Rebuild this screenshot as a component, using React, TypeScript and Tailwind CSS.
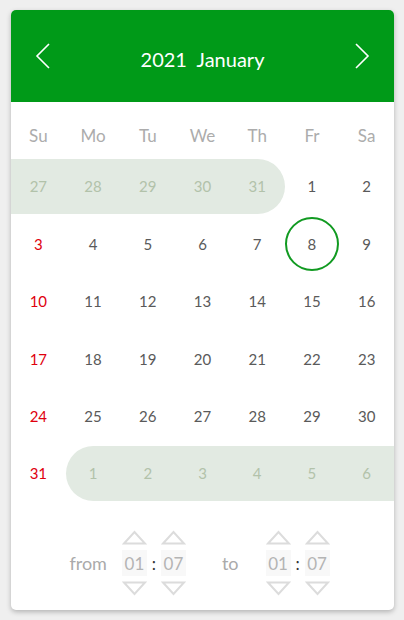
import React from 'react';

type Day = { n: number; muted?: boolean; sunday?: boolean };

const weekDays = ['Su', 'Mo', 'Tu', 'We', 'Th', 'Fr', 'Sa'];

const buildWeeks = (): Day[][] => {
    const days: Day[] = [];
    [27, 28, 29, 30, 31].forEach((n) => days.push({ n, muted: true }));
    for (let n = 1; n <= 31; n++) days.push({ n });
    for (let n = 1; n <= 6; n++) days.push({ n, muted: true });
    const weeks: Day[][] = [];
    for (let i = 0; i < days.length; i += 7) {
        weeks.push(days.slice(i, i + 7).map((d, j) => ({ ...d, sunday: j === 0 && !d.muted })));
    }
    return weeks;
};

const Chevron: React.FC<{ dir: 'left' | 'right' }> = ({ dir }) => (
    <svg width="16" height="26" viewBox="0 0 16 26" fill="none">
        <path
            d={dir === 'left' ? 'M14 1 L2 13 L14 25' : 'M2 1 L14 13 L2 25'}
            stroke="white"
            strokeWidth="1.6"
        />
    </svg>
);

const Triangle: React.FC<{ up?: boolean }> = ({ up }) => (
    <svg width="25" height="15" viewBox="0 0 25 15" fill="none">
        <path
            d={up ? 'M2 13.5 L12.5 2 L23 13.5 Z' : 'M2 1.5 L12.5 13 L23 1.5 Z'}
            stroke="#dcdcdc"
            strokeWidth="2"
            strokeLinejoin="miter"
        />
    </svg>
);

const Spinner: React.FC<{ value: string }> = ({ value }) => (
    <div className="flex flex-col items-center gap-[5px]">
        <Triangle up />
        <div className="w-[25px] h-[26px] bg-[#f8f8f8] flex items-center justify-center text-[17px] text-[#b4b4b4]">
            {value}
        </div>
        <Triangle />
    </div>
);

const TimePicker: React.FC<{ h: string; m: string }> = ({ h, m }) => (
    <div className="flex items-center">
        <Spinner value={h} />
        <span className="w-[14px] text-center text-[17px] text-[#333]">:</span>
        <Spinner value={m} />
    </div>
);

export default function App() {
    const weeks = buildWeeks();

    return (
        <div className="min-h-screen bg-[#efefef] pt-[10px] pl-[11px]" style={{ fontFamily: 'Lato, "Open Sans", sans-serif' }}>
            <div className="w-[383px] bg-white rounded-[5px] shadow-[0_2px_5px_rgba(0,0,0,0.25)] overflow-hidden">
                <div className="h-[92px] bg-[#009a18] flex items-center justify-between px-[24px]">
                    <Chevron dir="left" />
                    <span className="text-white text-[20px] pt-[5px]">2021&nbsp; January</span>
                    <Chevron dir="right" />
                </div>

                <div className="grid grid-cols-7 h-[56px] pt-[12px] items-center">
                    {weekDays.map((d) => (
                        <span key={d} className="text-center text-[17px] text-[#acacac]">{d}</span>
                    ))}
                </div>

                {weeks.map((week, wi) => (
                    <div key={wi} className="grid grid-cols-7 h-[57.4px] items-center">
                        {week.map((d, di) => {
                            const first = di === 0 || !week[di - 1].muted;
                            const last = di === 6 || !week[di + 1].muted;
                            const pill = d.muted
                                ? `bg-[#e2eae2] text-[#b2c2aa] ${first && di !== 0 ? 'rounded-l-full' : ''} ${last && di !== 6 ? 'rounded-r-full' : ''}`
                                : d.sunday
                                  ? 'text-[#e0000e]'
                                  : 'text-[#5a5a5a]';
                            const today = !d.muted && d.n === 8;
                            return (
                                <div key={di} className={`h-[55px] flex items-center justify-center text-[15px] ${pill}`}>
                                    {today ? (
                                        <span className="w-[54px] h-[54px] rounded-full border-2 border-[#119a21] flex items-center justify-center">
                                            {d.n}
                                        </span>
                                    ) : (
                                        d.n
                                    )}
                                </div>
                            );
                        })}
                    </div>
                ))}

                <div className="flex items-center justify-center pt-[28px] pb-[14px] pr-[6px]">
                    <span className="text-[18px] text-[#aaaaaa] mr-[15px]">from</span>
                    <TimePicker h="01" m="07" />
                    <span className="text-[18px] text-[#aaaaaa] ml-[36px] mr-[27px]">to</span>
                    <TimePicker h="01" m="07" />
                </div>
            </div>
        </div>
    );
}
